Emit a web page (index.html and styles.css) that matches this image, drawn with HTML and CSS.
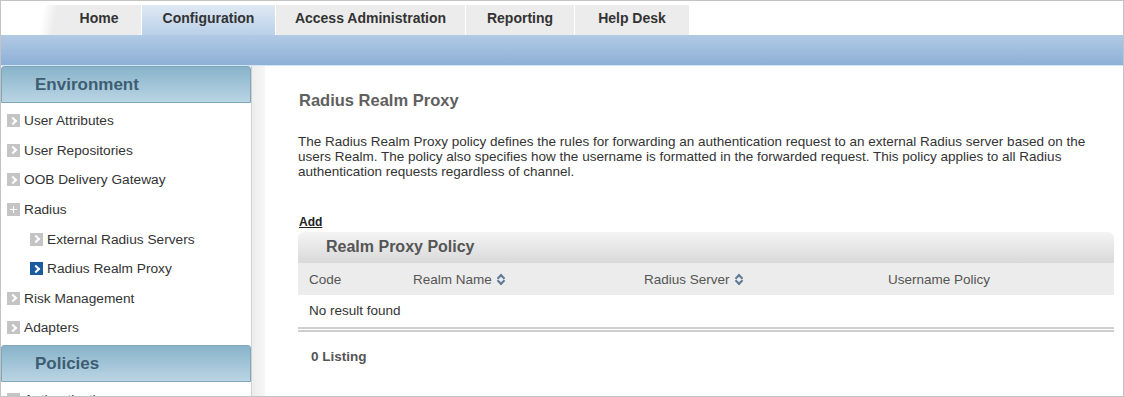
FILE: index.html
```html
<!DOCTYPE html>
<html lang="en">
<head>
    <meta charset="UTF-8">
    <title>Radius Realm Proxy</title>
    <link rel="stylesheet" href="styles.css">
</head>
<body>
    <div class="frame">
        <div class="topbar">
            <div class="tab-lead"></div>
            <ul class="tabs">
                <li class="tab" style="width: 85px">Home</li>
                <li class="tab active" style="width: 134px">Configuration</li>
                <li class="tab" style="width: 190px">Access Administration</li>
                <li class="tab" style="width: 109px">Reporting</li>
                <li class="tab" style="width: 115px">Help Desk</li>
            </ul>
        </div>
        <div class="band"></div>

        <div class="page">
            <aside class="sidebar">
                <h2 class="side-head">Environment</h2>
                <ul class="menu">
                    <li><span class="ico"></span>User Attributes</li>
                    <li><span class="ico"></span>User Repositories</li>
                    <li><span class="ico"></span>OOB Delivery Gateway</li>
                    <li><span class="ico plus"></span>Radius</li>
                    <li class="sub"><span class="ico"></span>External Radius Servers</li>
                    <li class="sub"><span class="ico current"></span>Radius Realm Proxy</li>
                    <li><span class="ico"></span>Risk Management</li>
                    <li><span class="ico"></span>Adapters</li>
                </ul>
                <h2 class="side-head">Policies</h2>
                <ul class="menu">
                    <li><span class="ico"></span>Authentication</li>
                </ul>
            </aside>
            <div class="gutter"></div>

            <main class="content">
                <h1>Radius Realm Proxy</h1>
                <p class="intro">The Radius Realm Proxy policy defines the rules for forwarding an authentication request to an external Radius server based on the users Realm. The policy also specifies how the username is formatted in the forwarded request. This policy applies to all Radius authentication requests regardless of channel.</p>

                <a class="add" href="#">Add</a>
                <div class="panel">
                    <div class="panel-head">Realm Proxy Policy</div>
                    <div class="cols">
                        <span class="col c1">Code</span>
                        <span class="col c2">Realm Name <span class="sort"></span></span>
                        <span class="col c3">Radius Server <span class="sort"></span></span>
                        <span class="col c4">Username Policy</span>
                    </div>
                    <div class="empty">No result found</div>
                    <div class="rule"></div>
                </div>
                <div class="listing">0 Listing</div>
            </main>
        </div>
    </div>
</body>
</html>
```

FILE: styles.css
```css
* {
    margin: 0;
    padding: 0;
    box-sizing: border-box;
    font-family: 'Liberation Sans', Arial, sans-serif;
}

body {
    background: white;
    width: 1124px;
    height: 397px;
    overflow: hidden;
}

.frame {
    width: 1124px;
    height: 397px;
    border: 1px solid #c3c3c3;
    overflow: hidden;
    background: white;
}

/* top navigation */
.topbar {
    display: flex;
    height: 34px;
    padding-top: 4px;
}

.tab-lead {
    width: 56px;
    background: linear-gradient(100deg, white 0%, white 70%, #ececec 92%);
}

.tabs {
    display: flex;
    list-style: none;
}

.tab {
    height: 30px;
    line-height: 27px;
    text-align: center;
    font-size: 14px;
    font-weight: bold;
    color: #333;
    background: #ececec;
    border-right: 1px solid white;
}

.tab.active {
    background: linear-gradient(to bottom, #dfe9f4 0%, #b9d0e8 100%);
}

.band {
    height: 31px;
    background: linear-gradient(to bottom, #b1cae5 0%, #8db0d7 100%);
    border-bottom: 1px solid #d4e5f5;
}

.page {
    display: flex;
    height: 331px;
}

/* left navigation */
.sidebar {
    width: 251px;
    border-right: 1px solid #d0d0d0;
}

.side-head {
    height: 37px;
    line-height: 36px;
    padding-left: 33px;
    font-size: 17px;
    font-weight: bold;
    color: #3d5d72;
    background: linear-gradient(to bottom, #88b3ca 0%, #bad5e4 100%);
    border: 1px solid #7ea7bd;
    border-radius: 3px 3px 0 0;
}

.menu {
    list-style: none;
    padding: 3px 0 2px;
}

.menu li {
    display: flex;
    align-items: center;
    height: 29.6px;
    padding-left: 6px;
    font-size: 13.7px;
    color: #333;
}

.menu li.sub {
    padding-left: 29px;
}

.ico {
    position: relative;
    width: 13px;
    height: 13px;
    margin-right: 4px;
    background: #c4c4c4;
}

.ico::after {
    content: '';
    position: absolute;
    left: 3px;
    top: 3.5px;
    width: 4px;
    height: 4px;
    border-top: 2px solid white;
    border-right: 2px solid white;
    transform: rotate(45deg);
}

.ico.current {
    background: #1b5c9e;
}

.ico.plus::after {
    left: 6px;
    top: 3px;
    width: 1px;
    height: 7px;
    border: none;
    background: white;
    transform: none;
}

.ico.plus::before {
    content: '';
    position: absolute;
    left: 3px;
    top: 6px;
    width: 7px;
    height: 1px;
    background: white;
}

.gutter {
    width: 13px;
    background: linear-gradient(to right, #ededed, #f6f6f6);
}

/* main area */
.content {
    flex: 1;
    padding: 25px 9px 0 33px;
}

h1 {
    font-size: 16.5px;
    font-weight: bold;
    color: #606060;
    margin-left: 1px;
}

.intro {
    margin-top: 24px;
    font-size: 13.5px;
    line-height: 15px;
    color: #333;
}

.add {
    display: inline-block;
    margin-top: 36px;
    margin-left: 1px;
    font-size: 12px;
    font-weight: bold;
    color: #222;
}

.panel {
    margin-top: 2px;
}

.panel-head {
    height: 31px;
    line-height: 30px;
    padding-left: 28px;
    font-size: 16px;
    font-weight: bold;
    color: #555;
    background: linear-gradient(to bottom, #f4f4f4 0%, #d9d9d9 100%);
    border-radius: 6px 6px 0 0;
}

.cols {
    display: flex;
    height: 32px;
    align-items: center;
    background: #ececec;
    font-size: 13.5px;
    color: #555;
}

.col {
    display: flex;
    align-items: center;
    gap: 5px;
}

.c1 { width: 115px; padding-left: 11px; }
.c2 { width: 231px; }
.c3 { width: 244px; }

.sort {
    position: relative;
    width: 8px;
    height: 12px;
}

.sort::before,
.sort::after {
    content: '';
    position: absolute;
    left: 1px;
    width: 4px;
    height: 4px;
    border-left: 2px solid #5f7a94;
    border-top: 2px solid #5f7a94;
}

.sort::before {
    top: 2px;
    transform: rotate(45deg);
}

.sort::after {
    top: 5px;
    transform: rotate(225deg);
}

.empty {
    height: 32px;
    line-height: 31px;
    padding-left: 11px;
    font-size: 13.5px;
    color: #333;
}

.rule {
    height: 5px;
    border-top: 2px solid #cfcfcf;
    border-bottom: 2px solid #cfcfcf;
}

.listing {
    margin-top: 17px;
    padding-left: 13px;
    font-size: 13.5px;
    font-weight: bold;
    color: #555;
}
```
